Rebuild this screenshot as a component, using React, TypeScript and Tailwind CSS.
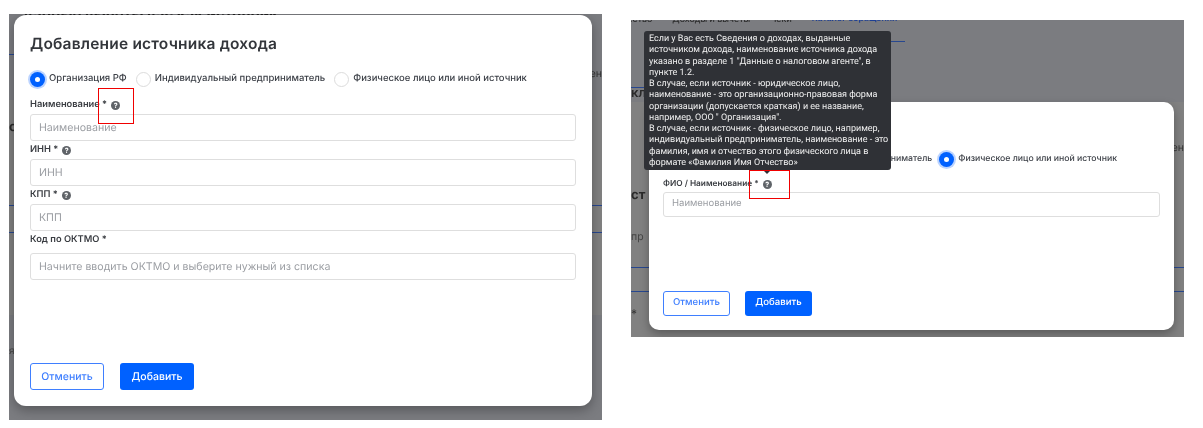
const font = "font-['Inter','Liberation_Sans',sans-serif]";

const tooltipLines = [
  "Если у Вас есть Сведения о доходах, выданные",
  "источником дохода, наименование источника дохода",
  'указано в разделе 1 "Данные о налоговом агенте", в',
  "пункте 1.2.",
  "В случае, если источник - юридическое лицо,",
  "наименование - это организационно-правовая форма",
  "организации (допускается краткая) и ее название,",
  'например, ООО " Организация".',
  "В случае, если источник - физическое лицо, например,",
  "индивидуальный предприниматель, наименование - это",
  "фамилия, имя и отчество этого физического лица в",
  "формате «Фамилия Имя Отчество»",
];

function Hint() {
  return (
    <span className="ml-[4px] inline-flex h-[9px] w-[9px] items-center justify-center rounded-full bg-[#5f6368] text-[7px] font-bold leading-none text-white">
      ?
    </span>
  );
}

function Radio({ label, checked, size }: { label: string; checked?: boolean; size: string }) {
  return (
    <div className="flex items-center gap-[4px]">
      {checked ? (
        <span className="flex h-[15px] w-[15px] shrink-0 items-center justify-center rounded-full bg-[#0061ff] shadow-[0_0_0_2px_#bcd4ff]">
          <span className="h-[5px] w-[5px] rounded-full bg-white" />
        </span>
      ) : (
        <span className="h-[15px] w-[15px] shrink-0 rounded-full border border-[#dcdcdc] bg-white" />
      )}
      <span className={`${size} font-medium whitespace-nowrap text-[#3d4148]`}>{label}</span>
    </div>
  );
}

function Field({ label, placeholder, hint, gap = "mt-[3px]" }: { label: string; placeholder: string; hint?: boolean; gap?: string }) {
  return (
    <div>
      <div className="flex h-[12px] items-center text-[9.3px] font-semibold text-[#3a3d42]">
        {label}
        {hint && <Hint />}
      </div>
      <div className={`${gap} flex h-[27px] items-center rounded-[3px] border border-[#dedede] bg-white pt-px pl-[8px] text-[10.6px] text-[#9a9da2]`}>
        {placeholder}
      </div>
    </div>
  );
}

function Buttons({ w, h, gap, text }: { w: string; h: string; gap: string; text: string }) {
  return (
    <div className={`flex ${gap} ${text} font-medium`}>
      <div className={`${w} ${h} flex items-center justify-center rounded-[3px] border border-[#3f7fff] bg-white text-[#3f7fff]`}>
        Отменить
      </div>
      <div className={`${w} ${h} flex items-center justify-center rounded-[3px] bg-[#0061ff] text-white`}>
        Добавить
      </div>
    </div>
  );
}

function LeftShot() {
  return (
    <div className="relative mt-[14px] ml-[9px] h-[406px] w-[593px] shrink-0 overflow-hidden bg-[#7b7c80]">
      {/* page behind the overlay */}
      <div className="absolute top-[86px] left-0 h-[215px] w-full bg-[#818181]" />
      <div className="absolute top-[-10px] left-[14px] text-[15px] font-bold whitespace-nowrap text-[#222]">
        данные вычеты вас как источник
      </div>
      <div className="absolute top-[40px] left-0 h-px w-[6px] bg-[#27478f]" />
      <div className="absolute top-[191px] left-0 h-px w-full bg-[#27478f]" />
      <div className="absolute top-[218px] left-0 h-px w-full bg-[#27478f]" />
      <div className="absolute top-[104px] left-0 text-[13px] font-bold text-[#2a2a2a]">с</div>
      <div className="absolute top-[330px] left-0 text-[10px] text-[#444]">я</div>
      <div className="absolute top-[52px] right-0 text-[10.5px] text-[#333]">ен</div>

      <div className="relative mt-px ml-[5px] h-[391px] w-[578px] rounded-[12px] bg-white px-[16px] pt-[18px] shadow-[0_4px_12px_rgba(0,0,0,0.3)]">
        <div className="text-[15.5px] leading-[22px] font-semibold tracking-[0.2px] text-[#33363b]">
          Добавление источника дохода
        </div>
        <div className="mt-[17px] flex gap-[9px]">
          <Radio label="Организация РФ" checked size="text-[9.5px]" />
          <Radio label="Индивидуальный предприниматель" size="text-[9.5px]" />
          <Radio label="Физическое лицо или иной источник" size="text-[9.5px]" />
        </div>
        <div className="mt-[12px] flex flex-col gap-[3px]">
          <Field label="Наименование *" placeholder="Наименование" hint />
          <Field label="ИНН *" placeholder="ИНН" hint />
          <Field label="КПП *" placeholder="КПП" hint />
          <Field label="Код по ОКТМО *" placeholder="Начните вводить ОКТМО и выберите нужный из списка" gap="mt-[7px]" />
        </div>
        <div className="mt-[83px]">
          <Buttons w="w-[74px]" h="h-[27px]" gap="gap-[16px]" text="text-[10.5px]" />
        </div>
      </div>
      <div className="absolute top-[74px] left-[89px] h-[36px] w-[36px] border-[1.5px] border-[#f00000]" />
    </div>
  );
}

function RightShot() {
  return (
    <div className="relative mt-[20px] ml-[29px] h-[317px] w-[553px] shrink-0 overflow-hidden bg-[#7b7c80]">
      <div className="absolute top-[82px] left-0 h-[235px] w-full bg-[#818181]" />
      <div className="absolute top-[-7px] left-[-9px] flex items-center gap-[20px] text-[8.8px] font-medium whitespace-nowrap text-[#2c2c2c]">
        <span>цество</span>
        <span>Доходы и вычеты</span>
        <span>Чеки</span>
        <span className="text-[8.6px] font-semibold text-[#1d3f94]">Каталог обращений</span>
      </div>
      <div className="absolute top-[21px] left-[189px] h-px w-[85px] bg-[#27478f]" />
      <div className="absolute top-[64px] left-0 text-[13px] font-semibold text-[#2a2a2a]">кл</div>
      <div className="absolute top-[166px] left-0 text-[13px] font-bold text-[#2a2a2a]">ст</div>
      <div className="absolute top-[209px] left-0 text-[10.5px] text-[#444]">пр</div>
      <div className="absolute top-[285px] left-0 text-[12px] text-[#333]">*</div>
      <div className="absolute top-[120px] right-0 text-[10.5px] text-[#333]">ен</div>
      <div className="absolute top-[67px] left-0 h-px w-[20px] bg-[#27478f]" />
      <div className="absolute top-[247px] left-0 h-px w-full bg-[#27478f]" />
      <div className="absolute top-[271px] left-0 h-px w-full bg-[#27478f]" />

      <div className="relative mt-[82px] ml-[18px] h-[228px] w-[525px] rounded-[10px] bg-white px-[14px] pt-[50px] shadow-[0_4px_10px_rgba(0,0,0,0.3)]">
        <div className="flex justify-end gap-[7px] pr-[43px]">
          <Radio label="Индивидуальный предприниматель" size="text-[8.7px]" />
          <Radio label="Физическое лицо или иной источник" checked size="text-[8.7px]" />
        </div>
        <div className="mt-[11px] flex h-[13px] items-center text-[8.3px] font-semibold text-[#3a3d42]">
          ФИО / Наименование *
          <Hint />
        </div>
        <div className="mt-[1px] flex h-[25px] items-center rounded-[3px] border border-[#dedede] bg-white pl-[8px] text-[9.5px] text-[#9a9da2]">
          Наименование
        </div>
        <div className="mt-[74px]">
          <Buttons w="w-[67px]" h="h-[25px]" gap="gap-[15px]" text="text-[9.6px]" />
        </div>
      </div>

      <div className="absolute top-[11px] left-[13px] h-[139px] w-[247px] overflow-hidden rounded-[3px] bg-[#2f3136] px-[5px] pt-[3px] font-['Roboto',sans-serif] text-[9px] leading-[11.25px] whitespace-nowrap text-[#f1f1f1]">
        {tooltipLines.map((line) => (
          <p key={line}>{line}</p>
        ))}
      </div>
      <div className="absolute top-[150px] left-[132px] h-0 w-0 border-x-[4px] border-t-[4px] border-x-transparent border-t-[#2f3136]" />
      <div className="absolute top-[150px] left-[118px] h-[29px] w-[41px] border-[1.5px] border-[#f00000]" />
    </div>
  );
}

export default function App() {
  return (
    <div className={`${font} flex h-[428px] w-[1203px] items-start overflow-hidden bg-white blur-[0.35px] [text-rendering:geometricPrecision]`}>
      <LeftShot />
      <RightShot />
    </div>
  );
}
